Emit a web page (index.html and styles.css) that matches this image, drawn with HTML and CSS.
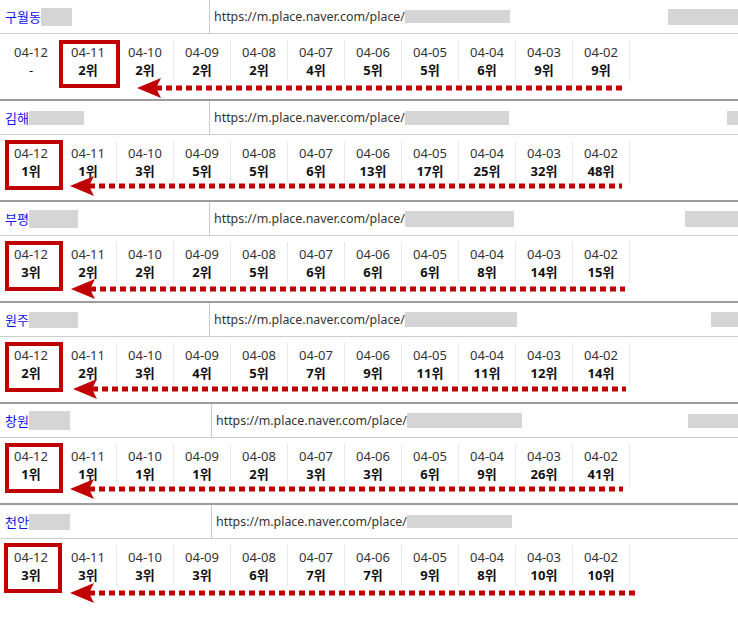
FILE: index.html
```html
<!DOCTYPE html>
<html lang="ko">

<head>
    <meta charset="UTF-8">
    <meta name="viewport" content="width=device-width, initial-scale=1.0">
    <title>플레이스 순위</title>
    <link rel="stylesheet" href="styles.css">
</head>

<body>
    <main class="rank-list">

        <section class="place">
            <div class="place-head">
                <div class="place-name"><span class="name">구월동</span><span class="blur name-1"></span></div>
                <div class="place-url">
                    <span class="url">https://m.place.naver.com/place/</span><span class="blur url-1"></span>
                    <span class="blur side side-1"></span>
                </div>
            </div>
            <div class="place-days">
                <div class="day"><span class="date">04-12</span><span class="rank none">-</span></div>
                <div class="day"><span class="date">04-11</span><span class="rank">2위</span></div>
                <div class="day"><span class="date">04-10</span><span class="rank">2위</span></div>
                <div class="day"><span class="date">04-09</span><span class="rank">2위</span></div>
                <div class="day"><span class="date">04-08</span><span class="rank">2위</span></div>
                <div class="day"><span class="date">04-07</span><span class="rank">4위</span></div>
                <div class="day"><span class="date">04-06</span><span class="rank">5위</span></div>
                <div class="day"><span class="date">04-05</span><span class="rank">5위</span></div>
                <div class="day"><span class="date">04-04</span><span class="rank">6위</span></div>
                <div class="day"><span class="date">04-03</span><span class="rank">9위</span></div>
                <div class="day"><span class="date">04-02</span><span class="rank">9위</span></div>
            </div>
            <div class="mark mark-1"></div>
            <svg class="arrow arrow-1"><path d="M0 11 L24 1 L19 11 L24 21 Z" /><line x1="19" y1="11" x2="100%" y2="11" /></svg>
        </section>

        <section class="place">
            <div class="place-head">
                <div class="place-name"><span class="name">김해</span><span class="blur name-2"></span></div>
                <div class="place-url">
                    <span class="url">https://m.place.naver.com/place/</span><span class="blur url-2"></span>
                    <span class="blur side side-2"></span>
                </div>
            </div>
            <div class="place-days">
                <div class="day"><span class="date">04-12</span><span class="rank">1위</span></div>
                <div class="day"><span class="date">04-11</span><span class="rank">1위</span></div>
                <div class="day"><span class="date">04-10</span><span class="rank">3위</span></div>
                <div class="day"><span class="date">04-09</span><span class="rank">5위</span></div>
                <div class="day"><span class="date">04-08</span><span class="rank">5위</span></div>
                <div class="day"><span class="date">04-07</span><span class="rank">6위</span></div>
                <div class="day"><span class="date">04-06</span><span class="rank">13위</span></div>
                <div class="day"><span class="date">04-05</span><span class="rank">17위</span></div>
                <div class="day"><span class="date">04-04</span><span class="rank">25위</span></div>
                <div class="day"><span class="date">04-03</span><span class="rank">32위</span></div>
                <div class="day"><span class="date">04-02</span><span class="rank">48위</span></div>
            </div>
            <div class="mark"></div>
            <svg class="arrow arrow-2"><path d="M0 11 L24 1 L19 11 L24 21 Z" /><line x1="19" y1="11" x2="100%" y2="11" /></svg>
        </section>

        <section class="place">
            <div class="place-head">
                <div class="place-name"><span class="name">부평</span><span class="blur name-3"></span></div>
                <div class="place-url">
                    <span class="url">https://m.place.naver.com/place/</span><span class="blur url-3"></span>
                    <span class="blur side side-3"></span>
                </div>
            </div>
            <div class="place-days">
                <div class="day"><span class="date">04-12</span><span class="rank">3위</span></div>
                <div class="day"><span class="date">04-11</span><span class="rank">2위</span></div>
                <div class="day"><span class="date">04-10</span><span class="rank">2위</span></div>
                <div class="day"><span class="date">04-09</span><span class="rank">2위</span></div>
                <div class="day"><span class="date">04-08</span><span class="rank">5위</span></div>
                <div class="day"><span class="date">04-07</span><span class="rank">6위</span></div>
                <div class="day"><span class="date">04-06</span><span class="rank">6위</span></div>
                <div class="day"><span class="date">04-05</span><span class="rank">6위</span></div>
                <div class="day"><span class="date">04-04</span><span class="rank">8위</span></div>
                <div class="day"><span class="date">04-03</span><span class="rank">14위</span></div>
                <div class="day"><span class="date">04-02</span><span class="rank">15위</span></div>
            </div>
            <div class="mark"></div>
            <svg class="arrow arrow-3"><path d="M0 11 L24 1 L19 11 L24 21 Z" /><line x1="19" y1="11" x2="100%" y2="11" /></svg>
        </section>

        <section class="place">
            <div class="place-head">
                <div class="place-name"><span class="name">원주</span><span class="blur name-4"></span></div>
                <div class="place-url">
                    <span class="url">https://m.place.naver.com/place/</span><span class="blur url-4"></span>
                    <span class="blur side side-4"></span>
                </div>
            </div>
            <div class="place-days">
                <div class="day"><span class="date">04-12</span><span class="rank">2위</span></div>
                <div class="day"><span class="date">04-11</span><span class="rank">2위</span></div>
                <div class="day"><span class="date">04-10</span><span class="rank">3위</span></div>
                <div class="day"><span class="date">04-09</span><span class="rank">4위</span></div>
                <div class="day"><span class="date">04-08</span><span class="rank">5위</span></div>
                <div class="day"><span class="date">04-07</span><span class="rank">7위</span></div>
                <div class="day"><span class="date">04-06</span><span class="rank">9위</span></div>
                <div class="day"><span class="date">04-05</span><span class="rank">11위</span></div>
                <div class="day"><span class="date">04-04</span><span class="rank">11위</span></div>
                <div class="day"><span class="date">04-03</span><span class="rank">12위</span></div>
                <div class="day"><span class="date">04-02</span><span class="rank">14위</span></div>
            </div>
            <div class="mark"></div>
            <svg class="arrow arrow-4"><path d="M0 11 L24 1 L19 11 L24 21 Z" /><line x1="19" y1="11" x2="100%" y2="11" /></svg>
        </section>

        <section class="place">
            <div class="place-head wide">
                <div class="place-name"><span class="name">창원</span><span class="blur name-5"></span></div>
                <div class="place-url">
                    <span class="url">https://m.place.naver.com/place/</span><span class="blur url-5"></span>
                    <span class="blur side side-5"></span>
                </div>
            </div>
            <div class="place-days">
                <div class="day"><span class="date">04-12</span><span class="rank">1위</span></div>
                <div class="day"><span class="date">04-11</span><span class="rank">1위</span></div>
                <div class="day"><span class="date">04-10</span><span class="rank">1위</span></div>
                <div class="day"><span class="date">04-09</span><span class="rank">1위</span></div>
                <div class="day"><span class="date">04-08</span><span class="rank">2위</span></div>
                <div class="day"><span class="date">04-07</span><span class="rank">3위</span></div>
                <div class="day"><span class="date">04-06</span><span class="rank">3위</span></div>
                <div class="day"><span class="date">04-05</span><span class="rank">6위</span></div>
                <div class="day"><span class="date">04-04</span><span class="rank">9위</span></div>
                <div class="day"><span class="date">04-03</span><span class="rank">26위</span></div>
                <div class="day"><span class="date">04-02</span><span class="rank">41위</span></div>
            </div>
            <div class="mark"></div>
            <svg class="arrow arrow-5"><path d="M0 11 L24 1 L19 11 L24 21 Z" /><line x1="19" y1="11" x2="100%" y2="11" /></svg>
        </section>

        <section class="place last">
            <div class="place-head wide">
                <div class="place-name"><span class="name">천안</span><span class="blur name-6"></span></div>
                <div class="place-url">
                    <span class="url">https://m.place.naver.com/place/</span><span class="blur url-6"></span>
                </div>
            </div>
            <div class="place-days">
                <div class="day"><span class="date">04-12</span><span class="rank">3위</span></div>
                <div class="day"><span class="date">04-11</span><span class="rank">3위</span></div>
                <div class="day"><span class="date">04-10</span><span class="rank">3위</span></div>
                <div class="day"><span class="date">04-09</span><span class="rank">3위</span></div>
                <div class="day"><span class="date">04-08</span><span class="rank">6위</span></div>
                <div class="day"><span class="date">04-07</span><span class="rank">7위</span></div>
                <div class="day"><span class="date">04-06</span><span class="rank">7위</span></div>
                <div class="day"><span class="date">04-05</span><span class="rank">9위</span></div>
                <div class="day"><span class="date">04-04</span><span class="rank">8위</span></div>
                <div class="day"><span class="date">04-03</span><span class="rank">10위</span></div>
                <div class="day"><span class="date">04-02</span><span class="rank">10위</span></div>
            </div>
            <div class="mark mark-6"></div>
            <svg class="arrow arrow-6"><path d="M0 11 L24 1 L19 11 L24 21 Z" /><line x1="19" y1="11" x2="100%" y2="11" /></svg>
        </section>

    </main>
</body>

</html>
```

FILE: styles.css
```css
html,
body {
    margin: 0px;
    padding: 0px;
}

body {
    background-color: #FFFFFF;
    color: #222222;
    font-family: "Noto Sans", "Noto Sans CJK KR", sans-serif;
    font-size: 13px;
    width: 738px;
    overflow: hidden;
}

.place {
    position: relative;
    height: 99px;
    border-bottom: 2px solid #9C9C9C;
}

.place.last {
    border-bottom: none;
}

/* header row: name | url */

.place-head {
    display: grid;
    grid-template-columns: 210px 1fr;
    height: 33px;
    border-bottom: 1px solid #CCCCCC;
}

.place-head.wide {
    grid-template-columns: 212px 1fr;
}

.place-name {
    display: flex;
    align-items: center;
    padding-left: 5px;
    border-right: 1px solid #CCCCCC;
}

.name {
    color: #1010F0;
}

.place-url {
    display: flex;
    align-items: center;
    padding-left: 4px;
    font-size: 12.4px;
    color: #333333;
}

.blur {
    display: inline-block;
    height: 15px;
    background-color: #D5D5D5;
}

.side {
    margin-left: auto;
}

.name-1 { width: 31px; height: 18px; }
.name-2 { width: 55px; height: 14px; }
.name-3 { width: 49px; height: 18px; }
.name-4 { width: 49px; height: 16px; }
.name-5 { width: 41px; height: 19px; }
.name-6 { width: 41px; height: 16px; }

.url-1 { width: 105px; height: 13px; }
.url-2 { width: 104px; height: 14px; }
.url-3 { width: 109px; height: 16px; }
.url-4 { width: 112px; }
.url-5 { width: 115px; }
.url-6 { width: 105px; height: 13px; }

.side-1 { width: 70px; height: 16px; }
.side-2 { width: 11px; height: 14px; }
.side-3 { width: 53px; height: 16px; }
.side-4 { width: 27px; }
.side-5 { width: 50px; height: 14px; }

/* daily ranks */

.place-days {
    display: flex;
    padding: 6px 0px 0px 3px;
}

.day {
    box-sizing: border-box;
    width: 57px;
    height: 41px;
    padding-top: 3px;
    display: flex;
    flex-direction: column;
    align-items: center;
    border-right: 1px solid #E8E8E8;
    line-height: 18px;
}

.date {
    color: #333333;
}

.rank {
    font-weight: bold;
    color: #111111;
}

.rank.none {
    font-weight: normal;
}

/* annotations */

.mark {
    position: absolute;
    left: 5px;
    top: 39px;
    box-sizing: border-box;
    width: 58px;
    height: 50px;
    border: 4px solid #C00000;
}

.mark-1 {
    left: 59px;
    top: 40px;
    width: 61px;
    height: 48px;
}

.mark-6 {
    left: 4px;
    top: 38px;
}

.arrow {
    position: absolute;
    height: 22px;
    overflow: visible;
}

.arrow path {
    fill: #C00000;
}

.arrow line {
    stroke: #C00000;
    stroke-width: 5;
    stroke-dasharray: 6 4;
}

.arrow-1 { left: 137px; top: 77px; width: 485px; }
.arrow-2 { left: 70px; top: 74px; width: 552px; }
.arrow-3 { left: 71px; top: 76px; width: 554px; }
.arrow-4 { left: 73px; top: 75px; width: 553px; }
.arrow-5 { left: 70px; top: 74px; width: 553px; }
.arrow-6 { left: 70px; top: 77px; width: 566px; }
```
